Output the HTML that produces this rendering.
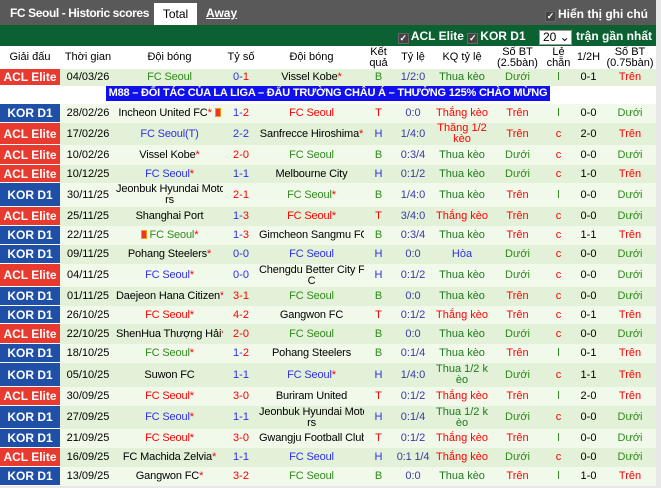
<!DOCTYPE html>
<html><head><meta charset="utf-8">
<style>
*{margin:0;padding:0;box-sizing:border-box}
body{width:661px;height:488px;background:#e8e8e8;font-family:"Liberation Sans",Arial,sans-serif;font-size:11px;overflow:hidden;position:relative}
.top{position:absolute;left:0;top:0;width:656px;height:25px;background:#595959;color:#fff;font-weight:bold;font-size:12px}
.top .t1{position:absolute;left:10px;top:6px;letter-spacing:-0.4px}
.top .tot{position:absolute;left:154px;top:3px;width:43px;height:22px;background:#fff;color:#000;text-align:center;padding-top:4px;font-weight:normal;font-size:12px}
.top .aw{position:absolute;left:206px;top:6px;text-decoration:underline}
.top .hi{position:absolute;right:8px;top:7px;font-size:12px}
.cb{display:inline-block;width:11px;height:11px;background:#444;border:1px solid #666;color:#fff;font-size:9px;line-height:9px;text-align:center;vertical-align:-1px;margin-right:2px}
.gbar{position:absolute;left:0;top:25px;width:656px;height:21px;background:#0b6131;color:#fff;font-weight:bold;font-size:12px}
.gbar .rt{position:absolute;right:4px;top:4px}
.sel{display:inline-block;width:33px;height:15px;background:#fff;color:#000;border:1px solid #999;font-weight:normal;font-size:12px;padding-left:3px;line-height:13px;vertical-align:-1px;margin:0 4px 0 10px}
table{position:absolute;left:0;top:46px;width:656px;border-collapse:collapse;table-layout:fixed}
td,th{text-align:center;vertical-align:middle;padding:0;line-height:11px;overflow:hidden;font-size:11px;white-space:nowrap}
th{background:#fff;height:23px;font-weight:normal;color:#000;font-size:11px;white-space:normal;line-height:11px}
tr.o td{background:#e2f1d7}
tr.e td{background:#f1f9eb}
td.lg{color:#fff;font-weight:bold;font-size:12px;box-shadow:inset 0 -1px 0 #fff}
td.acl{background:#e83a2f!important}
td.kor{background:#1f4fa6!important}
td.t{letter-spacing:-0.15px}
.g{color:#2e8b1a}.b{color:#2f2fe6}.r{color:#f00}.k{color:#000}.tl{color:#3a3aa6}.dg{color:#1f7a1f}
.ad td{background:#fff!important;height:15px}
.adb{display:inline-block;background:#1010ee;color:#fff;font-weight:bold;font-size:11px;width:444px;margin-left:106px;height:15px;line-height:15px;text-align:center;white-space:nowrap;overflow:hidden;letter-spacing:-0.2px}
.ic{display:inline-block;width:6px;height:9px;background:#e33;border:1px solid #f90;vertical-align:-1px}
</style></head><body>
<div class="top"><span class="t1">FC Seoul - Historic scores</span><span class="tot">Total</span><span class="aw">Away</span><span class="hi"><span class="cb">✓</span>Hiển thị ghi chú</span></div>
<div class="gbar"><span class="rt"><span class="cb">✓</span>ACL Elite <span class="cb">✓</span>KOR D1 <span class="sel">20 ⌄</span>trận gần nhất</span></div>
<table>
<colgroup><col style="width:60px"><col style="width:56px"><col style="width:107px"><col style="width:36px"><col style="width:105px"><col style="width:29px"><col style="width:40px"><col style="width:58px"><col style="width:53px"><col style="width:29px"><col style="width:31px"><col style="width:52px"></colgroup>
<tr><th>Giải đấu</th><th>Thời gian</th><th>Đội bóng</th><th>Tỷ số</th><th>Đội bóng</th><th>Kết quả</th><th>Tỷ lệ</th><th>KQ tỷ lệ</th><th>Số BT (2.5bàn)</th><th>Lẻ chẵn</th><th>1/2H</th><th>Số BT (0.75bàn)</th></tr>
<tr class="o" style="height:17px"><td class="lg acl">ACL Elite</td><td>04/03/26</td><td class="g t">FC Seoul</td><td><span class="b">0-</span><span class="r">1</span></td><td class="k t">Vissel Kobe<span class="r">*</span></td><td class="g">B</td><td class="tl">1/2:0</td><td class="dg">Thua kèo</td><td class="g">Dưới</td><td class="g">l</td><td>0-1</td><td class="r">Trên</td></tr>
<tr class="ad"><td colspan="12" style="text-align:left"><span class="adb">M88 – ĐỐI TÁC CỦA LA LIGA – ĐẤU TRƯỜNG CHÂU Á – THƯỞNG 125% CHÀO MỪNG</span></td></tr>
<tr class="e" style="height:19px"><td class="lg kor">KOR D1</td><td>28/02/26</td><td class="k t">Incheon United FC<span class="r">*</span> <span class="ic"></span></td><td><span class="b">1-</span><span class="r">2</span></td><td class="r t">FC Seoul</td><td class="r">T</td><td class="tl">0:0</td><td class="r">Thắng kèo</td><td class="r">Trên</td><td class="g">l</td><td>0-0</td><td class="g">Dưới</td></tr>
<tr class="o" style="height:22px"><td class="lg acl">ACL Elite</td><td>17/02/26</td><td class="b t">FC Seoul(T)</td><td class="b">2-2</td><td class="k t">Sanfrecce Hiroshima<span class="r">*</span></td><td class="b">H</td><td class="tl">1/4:0</td><td class="r">Thắng 1/2<br>kèo</td><td class="r">Trên</td><td class="r">c</td><td>2-0</td><td class="r">Trên</td></tr>
<tr class="e" style="height:20px"><td class="lg acl">ACL Elite</td><td>10/02/26</td><td class="k t">Vissel Kobe<span class="r">*</span></td><td class="r">2-0</td><td class="g t">FC Seoul</td><td class="g">B</td><td class="tl">0:3/4</td><td class="dg">Thua kèo</td><td class="g">Dưới</td><td class="r">c</td><td>0-0</td><td class="g">Dưới</td></tr>
<tr class="o" style="height:18px"><td class="lg acl">ACL Elite</td><td>10/12/25</td><td class="b t">FC Seoul<span class="r">*</span></td><td class="b">1-1</td><td class="k t">Melbourne City</td><td class="b">H</td><td class="tl">0:1/2</td><td class="dg">Thua kèo</td><td class="g">Dưới</td><td class="r">c</td><td>1-0</td><td class="r">Trên</td></tr>
<tr class="e" style="height:24px"><td class="lg kor">KOR D1</td><td>30/11/25</td><td class="k t">Jeonbuk Hyundai Moto<br>rs</td><td class="r">2-1</td><td class="g t">FC Seoul<span class="r">*</span></td><td class="g">B</td><td class="tl">1/4:0</td><td class="dg">Thua kèo</td><td class="r">Trên</td><td class="g">l</td><td>0-0</td><td class="g">Dưới</td></tr>
<tr class="o" style="height:19px"><td class="lg acl">ACL Elite</td><td>25/11/25</td><td class="k t">Shanghai Port</td><td><span class="b">1-</span><span class="r">3</span></td><td class="r t">FC Seoul*</td><td class="r">T</td><td class="tl">3/4:0</td><td class="r">Thắng kèo</td><td class="r">Trên</td><td class="r">c</td><td>0-0</td><td class="g">Dưới</td></tr>
<tr class="e" style="height:19px"><td class="lg kor">KOR D1</td><td>22/11/25</td><td class="g t"><span class="ic"></span> FC Seoul<span class="r">*</span></td><td><span class="b">1-</span><span class="r">3</span></td><td class="k t">Gimcheon Sangmu FC</td><td class="g">B</td><td class="tl">0:3/4</td><td class="dg">Thua kèo</td><td class="r">Trên</td><td class="r">c</td><td>1-1</td><td class="r">Trên</td></tr>
<tr class="o" style="height:19px"><td class="lg kor">KOR D1</td><td>09/11/25</td><td class="k t">Pohang Steelers<span class="r">*</span></td><td class="b">0-0</td><td class="b t">FC Seoul</td><td class="b">H</td><td class="tl">0:0</td><td class="b">Hòa</td><td class="g">Dưới</td><td class="r">c</td><td>0-0</td><td class="g">Dưới</td></tr>
<tr class="e" style="height:23px"><td class="lg acl">ACL Elite</td><td>04/11/25</td><td class="b t">FC Seoul<span class="r">*</span></td><td class="b">0-0</td><td class="k t">Chengdu Better City F<br>C</td><td class="b">H</td><td class="tl">0:1/2</td><td class="dg">Thua kèo</td><td class="g">Dưới</td><td class="r">c</td><td>0-0</td><td class="g">Dưới</td></tr>
<tr class="o" style="height:19px"><td class="lg kor">KOR D1</td><td>01/11/25</td><td class="k t">Daejeon Hana Citizen<span class="r">*</span></td><td class="r">3-1</td><td class="g t">FC Seoul</td><td class="g">B</td><td class="tl">0:0</td><td class="dg">Thua kèo</td><td class="r">Trên</td><td class="r">c</td><td>0-0</td><td class="g">Dưới</td></tr>
<tr class="e" style="height:18px"><td class="lg kor">KOR D1</td><td>26/10/25</td><td class="r t">FC Seoul*</td><td class="r">4-2</td><td class="k t">Gangwon FC</td><td class="r">T</td><td class="tl">0:1/2</td><td class="r">Thắng kèo</td><td class="r">Trên</td><td class="r">c</td><td>0-1</td><td class="r">Trên</td></tr>
<tr class="o" style="height:20px"><td class="lg acl">ACL Elite</td><td>22/10/25</td><td class="k t">ShenHua Thượng Hải<span class="r">*</span></td><td class="r">2-0</td><td class="g t">FC Seoul</td><td class="g">B</td><td class="tl">0:0</td><td class="dg">Thua kèo</td><td class="g">Dưới</td><td class="r">c</td><td>0-0</td><td class="g">Dưới</td></tr>
<tr class="e" style="height:19px"><td class="lg kor">KOR D1</td><td>18/10/25</td><td class="g t">FC Seoul<span class="r">*</span></td><td><span class="b">1-</span><span class="r">2</span></td><td class="k t">Pohang Steelers</td><td class="g">B</td><td class="tl">0:1/4</td><td class="dg">Thua kèo</td><td class="r">Trên</td><td class="g">l</td><td>0-1</td><td class="r">Trên</td></tr>
<tr class="o" style="height:24px"><td class="lg kor">KOR D1</td><td>05/10/25</td><td class="k t">Suwon FC</td><td class="b">1-1</td><td class="b t">FC Seoul<span class="r">*</span></td><td class="b">H</td><td class="tl">1/4:0</td><td class="dg">Thua 1/2 k<br>èo</td><td class="g">Dưới</td><td class="r">c</td><td>1-1</td><td class="r">Trên</td></tr>
<tr class="e" style="height:19px"><td class="lg acl">ACL Elite</td><td>30/09/25</td><td class="r t">FC Seoul*</td><td class="r">3-0</td><td class="k t">Buriram United</td><td class="r">T</td><td class="tl">0:1/2</td><td class="r">Thắng kèo</td><td class="r">Trên</td><td class="g">l</td><td>2-0</td><td class="r">Trên</td></tr>
<tr class="o" style="height:23px"><td class="lg kor">KOR D1</td><td>27/09/25</td><td class="b t">FC Seoul<span class="r">*</span></td><td class="b">1-1</td><td class="k t">Jeonbuk Hyundai Moto<br>rs</td><td class="b">H</td><td class="tl">0:1/4</td><td class="dg">Thua 1/2 k<br>èo</td><td class="g">Dưới</td><td class="r">c</td><td>0-0</td><td class="g">Dưới</td></tr>
<tr class="e" style="height:19px"><td class="lg kor">KOR D1</td><td>21/09/25</td><td class="r t">FC Seoul*</td><td class="r">3-0</td><td class="k t">Gwangju Football Club</td><td class="r">T</td><td class="tl">0:1/2</td><td class="r">Thắng kèo</td><td class="r">Trên</td><td class="g">l</td><td>0-0</td><td class="g">Dưới</td></tr>
<tr class="o" style="height:19px"><td class="lg acl">ACL Elite</td><td>16/09/25</td><td class="k t">FC Machida Zelvia<span class="r">*</span></td><td class="b">1-1</td><td class="b t">FC Seoul</td><td class="b">H</td><td class="tl t">0:1 1/4</td><td class="r">Thắng kèo</td><td class="g">Dưới</td><td class="r">c</td><td>0-0</td><td class="g">Dưới</td></tr>
<tr class="e" style="height:19px"><td class="lg kor">KOR D1</td><td>13/09/25</td><td class="k t">Gangwon FC<span class="r">*</span></td><td class="r">3-2</td><td class="g t">FC Seoul</td><td class="g">B</td><td class="tl">0:0</td><td class="dg">Thua kèo</td><td class="r">Trên</td><td class="g">l</td><td>1-0</td><td class="r">Trên</td></tr>
</table>
</body></html>
